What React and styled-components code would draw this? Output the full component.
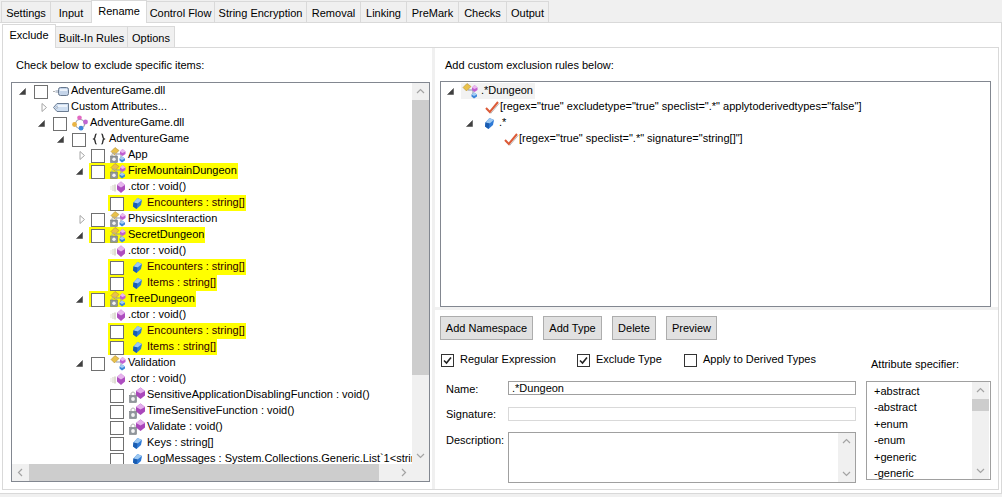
import React from "react";
import styled, { createGlobalStyle } from "styled-components";

const GlobalStyle = createGlobalStyle`
    html, body { margin: 0; padding: 0; background: #f0f0f0; }
    body { font-family: "Liberation Sans", Arial, sans-serif; font-size: 11px; color: #000; }
`;

const Window = styled.div`
    width: 1002px;
    height: 497px;
    overflow: hidden;
    display: flex;
    flex-direction: column;
    background: #f0f0f0;
`;
const TabStrip = styled.div`
    display: flex;
    align-items: flex-end;
    height: ${(p) => p.$height}px;
    padding-left: ${(p) => p.$pad}px;
    flex: none;
`;
const Tab = styled.div`
    box-sizing: border-box;
    width: ${(p) => p.$w}px;
    height: ${(p) => (p.$active ? p.$activeH : 21)}px;
    margin-bottom: ${(p) => (p.$active ? -1 : 0)}px;
    margin-right: -1px;
    padding-top: ${(p) => (p.$active ? 3 : 4)}px;
    text-align: center;
    line-height: 15px;
    white-space: nowrap;
    background: ${(p) => (p.$active ? "#fff" : "#f0f0f0")};
    border: 1px solid #d9d9d9;
    border-bottom: none;
    position: relative;
    z-index: ${(p) => (p.$active ? 1 : 0)};
`;
const OuterPage = styled.div`
    flex: none;
    box-sizing: border-box;
    width: 1002px;
    height: 472px;
    background: #fff;
    border-top: 1px solid #d9d9d9;
    border-right: 1px solid #d9d9d9;
    border-bottom: 1px solid #d9d9d9;
    display: flex;
    flex-direction: column;
`;
const InnerPage = styled.div`
    box-sizing: border-box;
    width: 997px;
    height: 443px;
    margin-left: 2px;
    background: #fff;
    border: 1px solid #d9d9d9;
    display: flex;
`;
const LeftPane = styled.div`
    box-sizing: border-box;
    width: 432px;
    flex: none;
    padding: 10px 0 0 8px;
    border-right: 3px solid #f0f0f0;
`;
const PaneTitle = styled.div`
    height: 15px;
    line-height: 15px;
    padding-left: 5px;
`;
const TreeBox = styled.div`
    box-sizing: border-box;
    width: 419px;
    height: 400px;
    margin-top: 9px;
    border: 1px solid #828790;
    display: grid;
    grid-template-columns: 400px 17px;
    grid-template-rows: 381px 17px;
    background: #f0f0f0;
`;
const TreeRows = styled.div`
    background: #fff;
    overflow: hidden;
`;
const Row = styled.div`
    display: flex;
    align-items: center;
    height: 16px;
    padding-left: ${(p) => p.$indent}px;
    white-space: nowrap;
`;
const Highlight = styled.div`
    display: flex;
    align-items: center;
    height: 16px;
    margin-left: -2px;
    padding: 0 1px 0 2px;
    background: #ffff00;
`;
const ArrowSlot = styled.span`
    flex: none;
    width: 15px;
    height: 16px;
    display: flex;
    align-items: center;
`;
const Arrow = styled.svg`
    width: 9px;
    height: 9px;
    margin-left: ${(p) => p.$ml}px;
`;
const CheckSquare = styled.span`
    box-sizing: border-box;
    flex: none;
    width: 14px;
    height: 14px;
    border: 1px solid #707070;
    background: #fff;
    margin-right: 5px;
    margin-top: 1px;
`;
const IconSvg = styled.svg`
    flex: none;
    width: 16px;
    height: 16px;
    margin-right: ${(p) => p.$mr ?? 2}px;
`;
const RowText = styled.span`
    line-height: 16px;
    margin-top: -2px;
    color: ${(p) => p.$color || "#000"};
`;
const VScroll = styled.div`
    background: #f0f0f0;
    display: flex;
    flex-direction: column;
`;
const ScrollArrow = styled.svg`
    width: 17px;
    height: 17px;
    flex: none;
`;
const ScrollThumbV = styled.div`
    height: ${(p) => p.$h}px;
    background: #cdcdcd;
    flex: none;
`;
const ScrollSpacer = styled.div`
    flex: 1;
`;
const HScroll = styled.div`
    background: #f0f0f0;
    display: flex;
`;
const ScrollThumbH = styled.div`
    width: ${(p) => p.$w}px;
    height: 17px;
    background: #cdcdcd;
    flex: none;
`;
const ScrollCorner = styled.div`
    background: #f0f0f0;
`;
const RightPane = styled.div`
    flex: 1;
    display: flex;
    flex-direction: column;
`;
const RulesArea = styled.div`
    box-sizing: border-box;
    height: 264px;
    padding: 10px 0 0 5px;
    border-bottom: 3px solid #f0f0f0;
`;
const RulesBox = styled.div`
    box-sizing: border-box;
    width: 551px;
    height: 226px;
    margin-top: 8px;
    border: 1px solid #828790;
    padding-top: 1px;
`;
const SelectedLabel = styled.span`
    display: flex;
    align-items: center;
    height: 16px;
    margin-left: -1px;
    padding: 0 2px 0 1px;
    background: #f2f2f2;
`;
const EditorArea = styled.div`
    flex: 1;
    padding: 6px 0 0 5px;
    display: flex;
    flex-direction: column;
`;
const ButtonRow = styled.div`
    display: flex;
    gap: 10px;
`;
const Button = styled.div`
    box-sizing: border-box;
    width: ${(p) => p.$w}px;
    height: 24px;
    background: #e1e1e1;
    border: 1px solid #adadad;
    text-align: center;
    white-space: nowrap;
    line-height: 22px;
`;
const EditorBody = styled.div`
    display: flex;
    margin-top: 14px;
`;
const EditorForm = styled.div`
    width: 426px;
    flex: none;
`;
const CheckRow = styled.div`
    display: flex;
    height: 27px;
    padding-left: 1px;
`;
const CheckItem = styled.label`
    display: flex;
    align-items: flex-start;
    width: ${(p) => p.$w}px;
    flex: none;
`;
const CheckBox = styled.span`
    box-sizing: border-box;
    width: 13px;
    height: 13px;
    margin-right: 6px;
    border: 1px solid #333;
    background: #fff;
    display: flex;
    align-items: center;
    justify-content: center;
    flex: none;
`;
const CheckLabel = styled.span`
    line-height: 11px;
    margin-top: 0;
    white-space: nowrap;
`;
const FieldRow = styled.div`
    display: flex;
    margin-bottom: 10px;
`;
const FieldLabel = styled.div`
    width: 62px;
    padding-left: 6px;
    flex: none;
    line-height: 15px;
    padding-top: ${(p) => p.$pt || 0}px;
`;
const FieldInput = styled.div`
    box-sizing: border-box;
    width: 348px;
    height: 14px;
    border: 1px solid ${(p) => (p.$disabled ? "#d9d9d9" : "#a0a0a0")};
    line-height: 12px;
    padding-left: 3px;
    background: #fff;
`;
const DescriptionBox = styled.div`
    box-sizing: border-box;
    width: 348px;
    height: 51px;
    border: 1px solid #a0a0a0;
    display: flex;
    justify-content: flex-end;
`;
const DescScroll = styled.div`
    width: 17px;
    background: #f0f0f0;
    display: flex;
    flex-direction: column;
    justify-content: space-between;
`;
const AttrColumn = styled.div`
    flex: none;
    width: 125px;
`;
const AttrTitle = styled.div`
    height: 15px;
    line-height: 15px;
    margin: 3px 0 0 5px;
`;
const AttrList = styled.div`
    box-sizing: border-box;
    height: 99px;
    margin-top: 9px;
    border: 1px solid #a0a0a0;
    display: flex;
`;
const AttrItems = styled.div`
    flex: 1;
    padding: 1px 0 0 7px;
    overflow: hidden;
`;
const AttrItem = styled.div`
    height: 16.4px;
    line-height: 16px;
`;
const AttrScroll = styled.div`
    width: 17px;
    margin-right: 1px;
    background: #f0f0f0;
    display: flex;
    flex-direction: column;
`;

function ExpandArrow({ open }) {
    return (
        <ArrowSlot>
            {open ? (
                <Arrow viewBox="0 0 9 9" $ml={-1}>
                    <path d="M7.5 1.5V7.5H1.5Z" fill="#404040" stroke="#505050" strokeWidth="0.6" />
                </Arrow>
            ) : (
                <Arrow viewBox="0 0 9 9" $ml={2}>
                    <path d="M2 0.5L6.5 4.5L2 8.5Z" fill="#fff" stroke="#a6a6a6" />
                </Arrow>
            )}
        </ArrowSlot>
    );
}

function FieldIcon() {
    return (
        <IconSvg viewBox="0 0 16 16">
            <path d="M8.5 3L13 5L12 10L7.5 14L4 11.5L4.5 7.5Z" fill="#2e7ad6" />
            <path d="M8.5 3L13 5L8.5 8.5L4.5 7.5Z" fill="#9cc8f2" />
            <path d="M8.5 8.5L4.5 7.5L4 11.5L7.5 14Z" fill="#1a5cb0" />
        </IconSvg>
    );
}

function CtorIcon() {
    return (
        <IconSvg viewBox="0 0 16 16">
            <rect x="0" y="7" width="2" height="4" fill="#f2f2ee" />
            <rect x="2" y="6" width="2" height="6" fill="#e8e8e0" />
            <rect x="4" y="5.5" width="2" height="7" fill="#dcdcd0" />
            <path d="M11 2.5L15 6V10.5L11 14L7 10.5V6Z" fill="#ad4dbf" />
            <path d="M11 2.5L15 6L11 8.5L7 6Z" fill="#e6b4ee" />
        </IconSvg>
    );
}

function LockedMethodIcon() {
    return (
        <IconSvg viewBox="0 0 16 16">
            <path d="M11.5 0.5L16 4V8.5L11.5 12L7 8.5V4Z" fill="#a947ba" />
            <path d="M11.5 0.5L16 4L11.5 6.5L7 4Z" fill="#e4aeec" />
            <path d="M2 8.5V7C2 4.5 6 4.5 6 7V8.5" fill="none" stroke="#a8a8a8" />
            <rect x="0.5" y="8.5" width="7" height="7" fill="#8f959b" stroke="#6c7075" strokeWidth="0.5" />
            <circle cx="4" cy="12" r="1.9" fill="#f4f4f4" />
        </IconSvg>
    );
}

function ClassIcon({ locked = true, mr }) {
    return (
        <IconSvg viewBox="0 0 16 16" $mr={mr}>
            <path d="M6 7L11 7V11" fill="none" stroke="#8d93ad" />
            <path d="M5 0.5L9 3.5L4.5 8L1 4.5Z" fill="#e9c14b" stroke="#a9842a" strokeWidth="0.5" />
            <path d="M12.5 2L15.5 4.5V7L12.5 9L10 7V4.5Z" fill="#c05ed0" />
            <path d="M12.5 2L15.5 4.5L12.5 6L10 4.5Z" fill="#eab8f0" />
            <path d="M12 9.5L15 11.5V13.5L12 15.5L9.5 13.5V11.5Z" fill="#3c86da" />
            <path d="M12 9.5L15 11.5L12 13L9.5 11.5Z" fill="#a6cdf3" />
            {locked && (
                <>
                    <path d="M2 9V7.5C2 5.5 6 5.5 6 7.5V9" fill="none" stroke="#a8a8a8" />
                    <rect x="0.5" y="9" width="7" height="6.5" fill="#8f959b" stroke="#6c7075" strokeWidth="0.5" />
                    <circle cx="4" cy="12.3" r="1.7" fill="#f4f4f4" />
                </>
            )}
        </IconSvg>
    );
}

function NamespaceIcon() {
    return (
        <IconSvg viewBox="0 0 16 16">
            <path d="M5.5 3C3.5 3 5 7 3 8C5 9 3.5 13 5.5 13" fill="none" stroke="#303030" strokeWidth="1.4" />
            <path d="M10.5 3C12.5 3 11 7 13 8C11 9 12.5 13 10.5 13" fill="none" stroke="#303030" strokeWidth="1.4" />
        </IconSvg>
    );
}

function ModuleIcon() {
    return (
        <IconSvg viewBox="0 0 16 16">
            <circle cx="8" cy="9" r="4.5" fill="none" stroke="#9aa0a8" strokeWidth="1.2" />
            <circle cx="7.5" cy="2.8" r="2.3" fill="#e268c2" />
            <circle cx="2.5" cy="9.5" r="2.4" fill="#e8b445" />
            <circle cx="13.5" cy="7" r="2.4" fill="#c066d2" />
            <circle cx="9" cy="13.2" r="2.4" fill="#3f88da" />
        </IconSvg>
    );
}

function AssemblyIcon() {
    return (
        <IconSvg viewBox="0 0 16 16">
            <rect x="0" y="8" width="2" height="1" fill="#b0b0b0" />
            <rect x="2.5" y="7" width="3" height="3" fill="#c5ccd6" />
            <rect x="5.5" y="4.5" width="10" height="8" rx="2" fill="#c4d4e9" stroke="#66778d" />
            <rect x="7" y="6" width="7" height="2" fill="#eaf1fa" />
        </IconSvg>
    );
}

function FolderTagIcon() {
    return (
        <IconSvg viewBox="0 0 16 16">
            <path d="M0.5 8.5L4 4.5H15.5V12.5H4Z" fill="#cfdff2" stroke="#6c7d93" />
            <rect x="5" y="6" width="9" height="2" fill="#eef4fb" />
            <circle cx="3.8" cy="8.5" r="0.9" fill="#fff" stroke="#6c7d93" strokeWidth="0.5" />
        </IconSvg>
    );
}

function RedCheck() {
    return (
        <IconSvg viewBox="0 0 16 16" $mr={0}>
            <path d="M2 9.5L6 13.5L14.5 3.5" fill="none" stroke="#b8b8b8" strokeWidth="1" transform="translate(0.8 0.8)" />
            <path d="M2 9L5.8 13L14 3" fill="none" stroke="#dc5b38" strokeWidth="2" />
        </IconSvg>
    );
}

const chevrons = {
    up: "M5 10L8.5 6.5L12 10",
    down: "M5 7L8.5 10.5L12 7",
    left: "M10 5L6.5 8.5L10 12",
    right: "M7 5L10.5 8.5L7 12",
};

function Chevron({ dir }) {
    return (
        <ScrollArrow viewBox="0 0 17 17">
            <path d={chevrons[dir]} fill="none" stroke="#a3a3a3" strokeWidth="1.2" />
        </ScrollArrow>
    );
}

function Tick() {
    return (
        <svg width="9" height="9" viewBox="0 0 9 9">
            <path d="M1 4.5L3.5 7L8 1.5" fill="none" stroke="#222" strokeWidth="1.6" />
        </svg>
    );
}

const treeRows = [
    { indent: 7, arrow: "open", icon: <AssemblyIcon />, text: "AdventureGame.dll", check: true },
    { indent: 26, arrow: "closed", icon: <FolderTagIcon />, text: "Custom Attributes..." },
    { indent: 26, arrow: "open", icon: <ModuleIcon />, text: "AdventureGame.dll", check: true },
    { indent: 45, arrow: "open", icon: <NamespaceIcon />, text: "AdventureGame", check: true },
    { indent: 64, arrow: "closed", icon: <ClassIcon />, text: "App", check: true },
    { indent: 64, arrow: "open", icon: <ClassIcon />, text: "FireMountainDungeon", check: true, hl: true },
    { indent: 98, icon: <CtorIcon />, text: ".ctor : void()" },
    { indent: 98, icon: <FieldIcon />, text: "Encounters : string[]", check: true, hl: true },
    { indent: 64, arrow: "closed", icon: <ClassIcon />, text: "PhysicsInteraction", check: true },
    { indent: 64, arrow: "open", icon: <ClassIcon />, text: "SecretDungeon", check: true, hl: true },
    { indent: 98, icon: <CtorIcon />, text: ".ctor : void()" },
    { indent: 98, icon: <FieldIcon />, text: "Encounters : string[]", check: true, hl: true },
    { indent: 98, icon: <FieldIcon />, text: "Items : string[]", check: true, hl: true },
    { indent: 64, arrow: "open", icon: <ClassIcon />, text: "TreeDungeon", check: true, hl: true },
    { indent: 98, icon: <CtorIcon />, text: ".ctor : void()" },
    { indent: 98, icon: <FieldIcon />, text: "Encounters : string[]", check: true, hl: true },
    { indent: 98, icon: <FieldIcon />, text: "Items : string[]", check: true, hl: true },
    { indent: 64, arrow: "open", icon: <ClassIcon locked={false} />, text: "Validation", check: true },
    { indent: 98, icon: <CtorIcon />, text: ".ctor : void()" },
    { indent: 98, icon: <LockedMethodIcon />, text: "SensitiveApplicationDisablingFunction : void()", check: true },
    { indent: 98, icon: <LockedMethodIcon />, text: "TimeSensitiveFunction : void()", check: true },
    { indent: 98, icon: <LockedMethodIcon />, text: "Validate : void()", check: true },
    { indent: 98, icon: <FieldIcon />, text: "Keys : string[]", check: true },
    { indent: 98, icon: <FieldIcon />, text: "LogMessages : System.Collections.Generic.List`1<string>", check: true },
];

function TreeRow({ row }) {
    const content = (
        <>
            {row.check && <CheckSquare />}
            {row.icon}
            <RowText $color={row.hl && !row.arrow ? "#300000" : "#000"}>{row.text}</RowText>
        </>
    );
    return (
        <Row $indent={row.indent}>
            {row.arrow && <ExpandArrow open={row.arrow === "open"} />}
            {row.hl ? <Highlight>{content}</Highlight> : content}
        </Row>
    );
}

const mainTabs = [
    ["Settings", 50], ["Input", 42], ["Rename", 56], ["Control Flow", 69], ["String Encryption", 93],
    ["Removal", 55], ["Linking", 47], ["PreMark", 53], ["Checks", 49], ["Output", 43],
];
const subTabs = [["Exclude", 54], ["Built-In Rules", 73], ["Options", 48]];
const attributes = ["+abstract", "-abstract", "+enum", "-enum", "+generic", "-generic"];

export default function App() {
    return (
        <Window>
            <GlobalStyle />
            <TabStrip $height={22} $pad={1}>
                {mainTabs.map(([name, w]) => (
                    <Tab key={name} $w={w} $activeH={23} $active={name === "Rename"}>
                        {name}
                    </Tab>
                ))}
            </TabStrip>
            <OuterPage>
                <TabStrip $height={24} $pad={2}>
                    {subTabs.map(([name, w]) => (
                        <Tab key={name} $w={w} $activeH={24} $active={name === "Exclude"}>
                            {name}
                        </Tab>
                    ))}
                </TabStrip>
                <InnerPage>
                    <LeftPane>
                        <PaneTitle>Check below to exclude specific items:</PaneTitle>
                        <TreeBox>
                            <TreeRows>
                                {treeRows.map((row, i) => (
                                    <TreeRow key={i} row={row} />
                                ))}
                            </TreeRows>
                            <VScroll>
                                <Chevron dir="up" />
                                <ScrollThumbV $h={275} />
                                <ScrollSpacer />
                                <Chevron dir="down" />
                            </VScroll>
                            <HScroll>
                                <Chevron dir="left" />
                                <ScrollThumbH $w={350} />
                                <ScrollSpacer />
                                <Chevron dir="right" />
                            </HScroll>
                            <ScrollCorner />
                        </TreeBox>
                    </LeftPane>
                    <RightPane>
                        <RulesArea>
                            <PaneTitle>Add custom exclusion rules below:</PaneTitle>
                            <RulesBox>
                                <Row $indent={6}>
                                    <ExpandArrow open />
                                    <SelectedLabel>
                                        <ClassIcon locked={false} mr={3} />
                                        <RowText>.*Dungeon</RowText>
                                    </SelectedLabel>
                                </Row>
                                <Row $indent={43}>
                                    <RedCheck />
                                    <RowText>[regex="true" excludetype="true" speclist=".*" applytoderivedtypes="false"]</RowText>
                                </Row>
                                <Row $indent={25}>
                                    <ExpandArrow open />
                                    <FieldIcon />
                                    <RowText>.*</RowText>
                                </Row>
                                <Row $indent={62}>
                                    <RedCheck />
                                    <RowText>[regex="true" speclist=".*" signature="string[]"]</RowText>
                                </Row>
                            </RulesBox>
                        </RulesArea>
                        <EditorArea>
                            <ButtonRow>
                                <Button $w={93}>Add Namespace</Button>
                                <Button $w={59}>Add Type</Button>
                                <Button $w={44}>Delete</Button>
                                <Button $w={51}>Preview</Button>
                            </ButtonRow>
                            <EditorBody>
                                <EditorForm>
                                    <CheckRow>
                                        <CheckItem $w={136}>
                                            <CheckBox>
                                                <Tick />
                                            </CheckBox>
                                            <CheckLabel>Regular Expression</CheckLabel>
                                        </CheckItem>
                                        <CheckItem $w={107}>
                                            <CheckBox>
                                                <Tick />
                                            </CheckBox>
                                            <CheckLabel>Exclude Type</CheckLabel>
                                        </CheckItem>
                                        <CheckItem $w={170}>
                                            <CheckBox />
                                            <CheckLabel>Apply to Derived Types</CheckLabel>
                                        </CheckItem>
                                    </CheckRow>
                                    <FieldRow>
                                        <FieldLabel $pt={1}>Name:</FieldLabel>
                                        <FieldInput>.*Dungeon</FieldInput>
                                    </FieldRow>
                                    <FieldRow>
                                        <FieldLabel>Signature:</FieldLabel>
                                        <FieldInput $disabled />
                                    </FieldRow>
                                    <FieldRow>
                                        <FieldLabel $pt={1}>Description:</FieldLabel>
                                        <DescriptionBox>
                                            <DescScroll>
                                                <Chevron dir="up" />
                                                <Chevron dir="down" />
                                            </DescScroll>
                                        </DescriptionBox>
                                    </FieldRow>
                                </EditorForm>
                                <AttrColumn>
                                    <AttrTitle>Attribute specifier:</AttrTitle>
                                    <AttrList>
                                        <AttrItems>
                                            {attributes.map((a) => (
                                                <AttrItem key={a}>{a}</AttrItem>
                                            ))}
                                        </AttrItems>
                                        <AttrScroll>
                                            <Chevron dir="up" />
                                            <ScrollThumbV $h={12} />
                                            <ScrollSpacer />
                                            <Chevron dir="down" />
                                        </AttrScroll>
                                    </AttrList>
                                </AttrColumn>
                            </EditorBody>
                        </EditorArea>
                    </RightPane>
                </InnerPage>
            </OuterPage>
        </Window>
    );
}
